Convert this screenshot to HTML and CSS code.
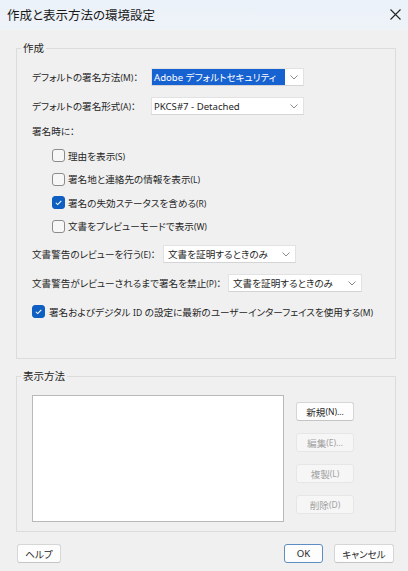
FILE: index.html
```html
<!DOCTYPE html>
<html lang="ja">
<head>
<meta charset="utf-8">
<title>作成と表示方法の環境設定</title>
<link rel="stylesheet" href="styles.css">
</head>
<body>
<div class="dialog">
  <div class="titlebar">
    <span class="title">作成と表示方法の環境設定</span>
    <svg class="close" width="11" height="11" viewBox="0 0 11 11"><path d="M0.5 0.5 L10.5 10.5 M10.5 0.5 L0.5 10.5" stroke="#222" stroke-width="1.1" fill="none"/></svg>
  </div>

  <fieldset class="group g1">
    <legend>作成</legend>
    <div class="gbody">
      <div class="row r1">
        <span class="label w1">デフォルトの署名方法<span class="ak">(M)</span>：</span>
        <div class="select s1"><span class="val hl">Adobe デフォルトセキュリティ</span><svg class="chev" width="8" height="5" viewBox="0 0 8 5"><path d="M0.5 0.5 L4 4 L7.5 0.5" stroke="#8a8a8a" fill="none"/></svg></div>
      </div>
      <div class="row r2">
        <span class="label w1">デフォルトの署名形式<span class="ak">(A)</span>：</span>
        <div class="select s1"><span class="val latin">PKCS#7 - Detached</span><svg class="chev" width="8" height="5" viewBox="0 0 8 5"><path d="M0.5 0.5 L4 4 L7.5 0.5" stroke="#8a8a8a" fill="none"/></svg></div>
      </div>
      <div class="sublabel">署名時に：</div>
      <div class="checks">
        <div class="check"><span class="box"></span><span>理由を表示<span class="ak">(S)</span></span></div>
        <div class="check"><span class="box"></span><span>署名地と連絡先の情報を表示<span class="ak">(L)</span></span></div>
        <div class="check"><span class="box on"><svg width="13" height="13" viewBox="0 0 13 13"><path d="M3.3 6.8 L5.5 9 L9.8 4.5" stroke="#fff" stroke-width="1.2" fill="none"/></svg></span><span>署名の失効ステータスを含める<span class="ak">(R)</span></span></div>
        <div class="check"><span class="box"></span><span>文書をプレビューモードで表示<span class="ak">(W)</span></span></div>
      </div>
      <div class="row r3">
        <span class="label w3">文書警告のレビューを行う<span class="ak">(E)</span>：</span>
        <div class="select s3"><span class="val">文書を証明するときのみ</span><svg class="chev" width="8" height="5" viewBox="0 0 8 5"><path d="M0.5 0.5 L4 4 L7.5 0.5" stroke="#8a8a8a" fill="none"/></svg></div>
      </div>
      <div class="row r4">
        <span class="label w4">文書警告がレビューされるまで署名を禁止<span class="ak">(P)</span>：</span>
        <div class="select s4"><span class="val">文書を証明するときのみ</span><svg class="chev" width="8" height="5" viewBox="0 0 8 5"><path d="M0.5 0.5 L4 4 L7.5 0.5" stroke="#8a8a8a" fill="none"/></svg></div>
      </div>
      <div class="check last"><span class="box on"><svg width="13" height="13" viewBox="0 0 13 13"><path d="M3.3 6.8 L5.5 9 L9.8 4.5" stroke="#fff" stroke-width="1.2" fill="none"/></svg></span><span>署名およびデジタル <span class="ak">ID</span> の設定に最新のユーザーインターフェイスを使用する<span class="ak">(M)</span></span></div>
    </div>
  </fieldset>

  <fieldset class="group g2">
    <legend>表示方法</legend>
    <div class="gbody2">
      <div class="listbox"></div>
      <div class="sidebtns">
        <button class="btn">新規<span class="ak">(N)...</span></button>
        <button class="btn dis">編集<span class="ak">(E)...</span></button>
        <button class="btn dis">複製<span class="ak">(L)</span></button>
        <button class="btn dis">削除<span class="ak">(D)</span></button>
      </div>
    </div>
  </fieldset>

  <div class="footer">
    <button class="btn help">ヘルプ</button>
    <div class="spacer"></div>
    <button class="btn ok">OK</button>
    <button class="btn cancel">キャンセル</button>
  </div>
</div>
</body>
</html>
```
FILE: styles.css
```css
* { box-sizing: border-box; }
html, body { margin: 0; padding: 0; }
body {
  width: 408px;
  height: 571px;
  background: #f0f0f0;
  font-family: "Noto Sans", "Noto Sans CJK JP", sans-serif;
  font-size: 9.6px;
  color: #262626;
  font-feature-settings: "palt" 1;
  overflow: hidden;
}
.dialog { display: flex; flex-direction: column; }
.titlebar {
  height: 30px;
  background: linear-gradient(#eaf1f8, #eef3f8);
  display: flex;
  align-items: center;
  justify-content: space-between;
  padding: 0 7px 2px 7px;
}
.title { font-size: 12.5px; color: #1a1a1a; }
.close { display: block; }

.group {
  margin: 11px 12px 0 16px;
  padding: 0;
  border: 1px solid #dcdcdc;
  min-width: 0;
}
.group legend {
  margin-left: 4px;
  padding: 0 2px;
  font-size: 10.5px;
  line-height: 14px;
}
.gbody { padding: 0 0 40px 15px; }
.ak { font-size: 8.5px; }
.row { display: flex; align-items: center; height: 18px; }
.r1 { margin-top: 13px; }
.r2 { margin-top: 11px; }
.r3 { margin-top: 7px; }
.r4 { margin-top: 11px; }
.label { white-space: nowrap; flex: none; }
.w1 { width: 119px; }
.w3 { width: 131px; }
.w4 { width: 196px; }
.select {
  height: 18px;
  background: #fff;
  border: 1px solid #e2e2e2;
  border-bottom-color: #d4d4d4;
  display: flex;
  align-items: center;
  flex: none;
}
.s1 { width: 153px; }
.s3 { width: 133px; }
.s4 { width: 134px; }
.val { padding-left: 4px; white-space: nowrap; }
.val.latin { padding-left: 2px; }
.val.hl {
  background: #1762d1;
  color: #fff;
  height: 16px;
  width: 133px;
  padding-left: 2px;
  display: flex;
  align-items: center;
}
.chev { margin-left: auto; margin-right: 5px; display: block; }
.sublabel { margin-top: 10px; height: 14px; line-height: 14px; }
.checks { margin-top: 5px; padding-left: 20px; }
.check { display: flex; align-items: center; height: 23.5px; white-space: nowrap; }
.box {
  width: 13px;
  height: 13px;
  border: 1px solid #8c8c8c;
  border-radius: 3px;
  background: #f7f7f7;
  margin-right: 3px;
  flex: none;
  display: flex;
  align-items: center;
  justify-content: center;
}
.box svg { display: block; }
.box.on { background: #0f5fc2; border-color: #0f5fc2; }
.check.last { height: 13px; margin-top: 13px; }
.check.last .box { margin-right: 4px; }

.g2 { margin-top: 10px; }
.gbody2 { display: flex; padding: 12px 0 9px 15px; }
.listbox {
  width: 252px;
  height: 127px;
  background: #fff;
  border: 1px solid #b9b9b9;
}
.sidebtns {
  display: flex;
  flex-direction: column;
  gap: 12px;
  margin-left: 12px;
  padding-top: 7px;
}
.btn {
  font: inherit;
  font-feature-settings: "palt" 1;
  color: #262626;
  background: #fdfdfd;
  border: 1px solid #d6d6d6;
  border-bottom-color: #c4c4c4;
  border-radius: 3px;
  height: 19px;
  padding: 0;
  display: flex;
  align-items: center;
  justify-content: center;
}
.sidebtns .btn { width: 58px; }
.btn.dis { background: #f6f6f6; border-color: #e6e6e6; color: #a2a2a2; }
.footer { display: flex; margin: 12px 14px 0 17px; }
.spacer { flex: 1; }
.help { width: 44px; }
.ok { width: 39px; border: 1px solid #5d8dc2; }
.cancel { width: 60px; margin-left: 11px; }
```
